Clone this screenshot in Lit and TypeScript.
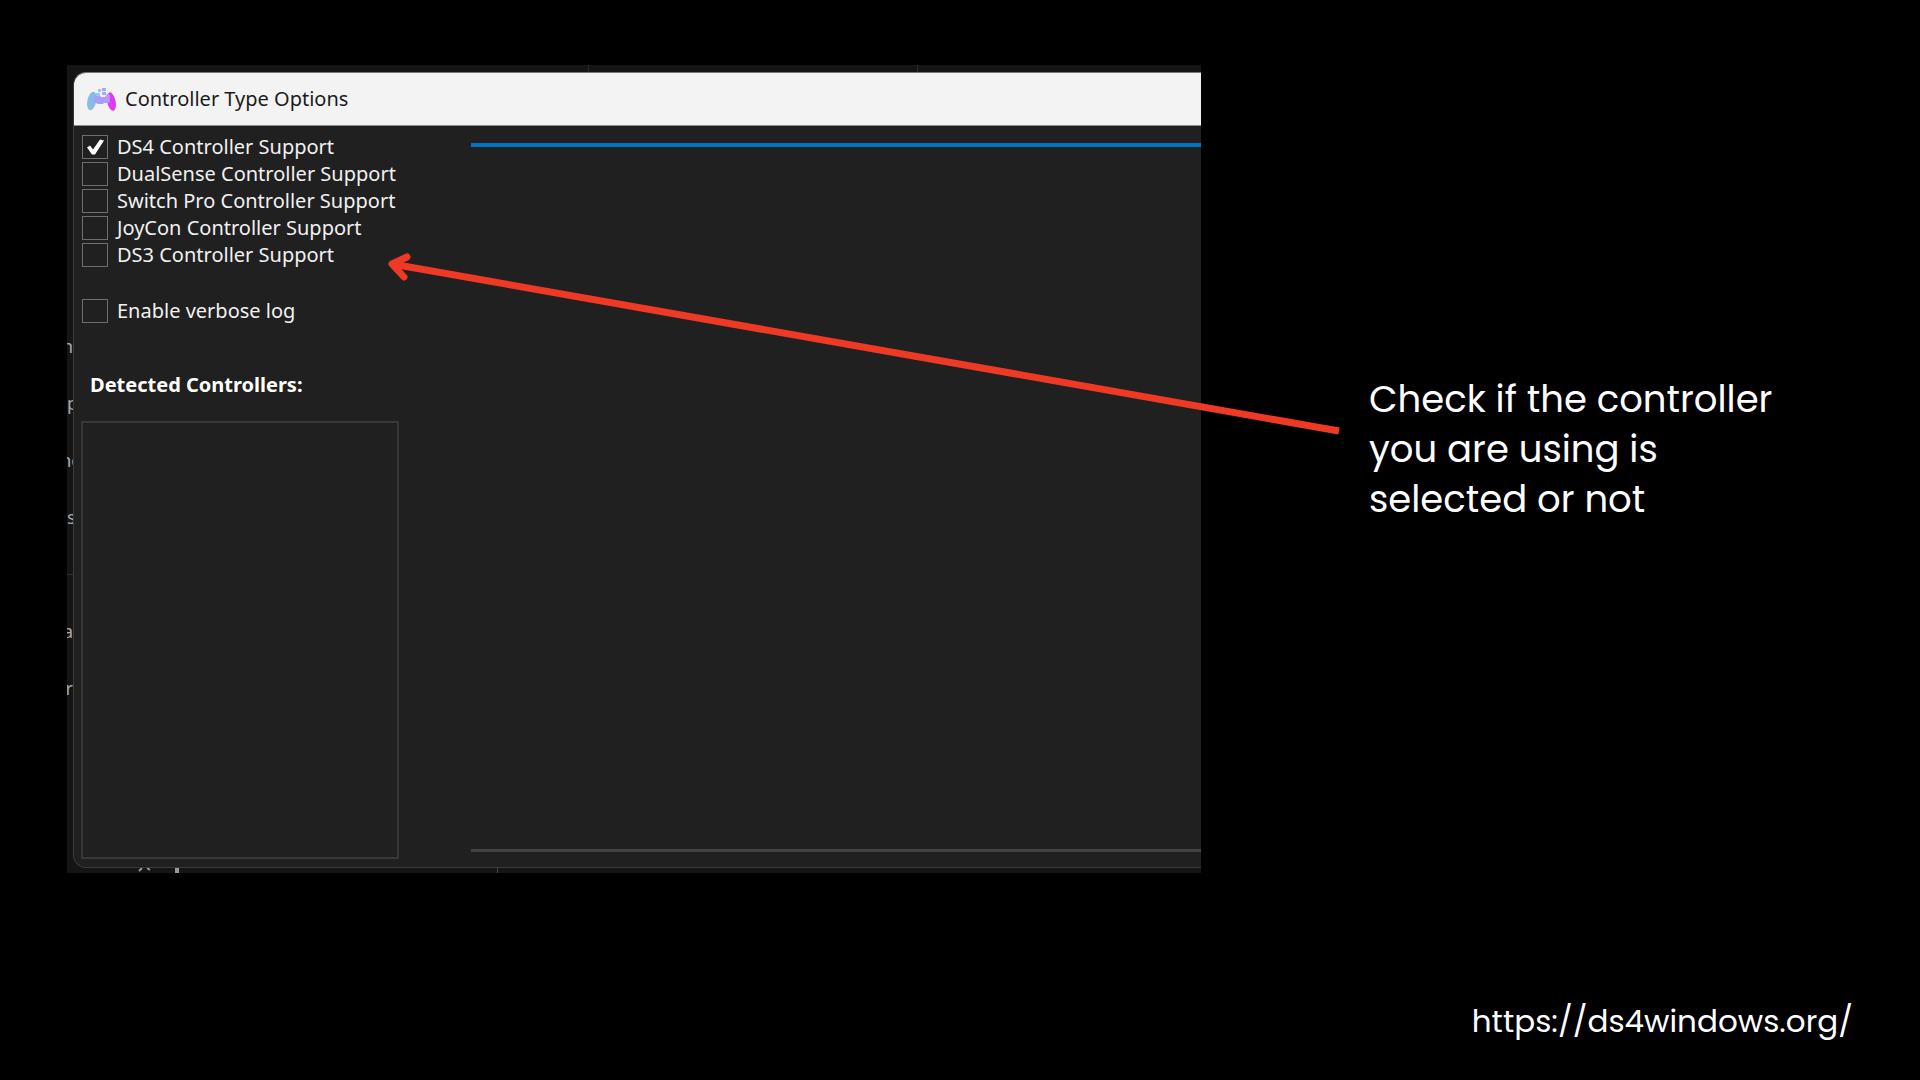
import { LitElement, html, css, svg } from "lit";
import { customElement, property } from "lit/decorators.js";

interface Option {
  id: string;
  label: string;
  checked?: boolean;
}

const SUPPORT: Option[] = [
  { id: "ds4", label: "DS4 Controller Support", checked: true },
  { id: "dualsense", label: "DualSense Controller Support" },
  { id: "switchpro", label: "Switch Pro Controller Support" },
  { id: "joycon", label: "JoyCon Controller Support" },
  { id: "ds3", label: "DS3 Controller Support" },
];

// Ends of the menu labels of the window behind the dialog.
const BEHIND = [
  { text: "n", side: "end" },
  { text: "p", side: "start" },
  { text: "nc", side: "middle" },
  { text: "s", side: "start" },
  { text: "", side: "rule" },
  { text: "a", side: "end" },
  { text: "er", side: "end" },
];

const gamepad = svg`
  <ellipse cx="5.8" cy="14" rx="4.4" ry="9.4" transform="rotate(12 5.8 14)" fill="#86bde6"/>
  <ellipse cx="25.4" cy="14.6" rx="4.2" ry="9.4" transform="rotate(-12 25.4 14.6)" fill="#dc3cfa"/>
  <path d="M9 8h4l2 2h4l2-3h2l1 8-2 1h-4l-1 1h-5l-2-1h-2z" fill="#a99bff"/>
  <path d="M12 2h3v3h-3zM10 6h4v3h-4z" fill="#9cc4f2"/>
  <path d="M16 1h4v3h-4zM16 5h4v3h-4z" fill="#a9a6ff"/>
  <path d="M20 8h4l-1 6h-3z" fill="#c493ff"/>`;

@customElement("option-box")
export class OptionBox extends LitElement {
  @property() label = "";
  @property({ type: Boolean }) checked = false;

  static styles = css`
    :host {
      display: block;
    }
    .row {
      display: flex;
      align-items: center;
      gap: 9px;
      height: 27px;
      font-size: 20px;
      line-height: 27px;
      color: #f1f1f1;
      white-space: nowrap;
    }
    .box {
      appearance: none;
      box-sizing: border-box;
      width: 26px;
      height: 24px;
      margin: 0;
      border: 1px solid #6e6e72;
      background: #202020;
      flex: none;
      display: block;
    }
    .box:checked::before {
      content: "";
      display: block;
      width: 24px;
      height: 22px;
      background: #fff;
      clip-path: polygon(4px 12px, 7px 10px, 10px 14px, 17px 4px, 21px 5px, 12px 19px, 9px 19px);
    }
  `;

  render() {
    return html`<label class="row" for="box">
      <input class="box" id="box" type="checkbox" .checked=${this.checked} />
      <span>${this.label}</span>
    </label>`;
  }
}

@customElement("app-root")
export class AppRoot extends LitElement {
  static styles = css`
    :host {
      display: block;
    }
    .slide {
      position: relative;
      box-sizing: border-box;
      min-height: 100vh;
      padding: 65px 67px 36px 67px;
      background: #000;
      color: #fff;
      display: grid;
      grid-template-columns: 1134fr 652fr;
      grid-template-rows: auto 1fr;
      font-family: "Segoe UI", "Noto Sans", sans-serif;
      overflow: hidden;
    }
    .shot {
      display: grid;
      grid-template-columns: 6px 1fr;
      grid-template-rows: 7px auto 5px;
      background: #151515;
      overflow: hidden;
    }
    .tabs {
      grid-column: 1 / -1;
      display: grid;
      grid-template-columns: 522fr 329fr 283fr;
    }
    .tab {
      border-right: 1px solid #2c2c2c;
    }
    .tab:last-child {
      border-right: none;
    }
    .behind {
      padding-top: 246px;
      overflow: hidden;
      color: #a8a8a8;
      font-size: 18px;
      line-height: 57px;
    }
    .piece {
      display: flex;
      height: 57px;
      overflow: hidden;
    }
    .end {
      justify-content: flex-end;
    }
    .middle {
      justify-content: center;
    }
    .rule {
      align-items: center;
    }
    .rule::before {
      content: "";
      flex: 1;
      height: 1px;
      background: #303030;
    }
    .dialog {
      display: flex;
      flex-direction: column;
      background: #202020;
      border: 1px solid #3a3a3a;
      border-top-color: #777;
      border-right: none;
      border-radius: 13px 0 0 13px;
      overflow: hidden;
    }
    .titlebar {
      display: flex;
      align-items: center;
      gap: 8px;
      height: 52px;
      padding-left: 12px;
      background: #f3f3f3;
      border-bottom: 1px solid #8c8c8c;
      color: #1b1b1b;
    }
    .logo {
      width: 31px;
      height: 24px;
    }
    .title {
      margin: 0;
      font-size: 20px;
      line-height: 28px;
      font-weight: 400;
    }
    .body {
      display: grid;
      grid-template-columns: 318px 1fr;
      column-gap: 72px;
      padding: 7px 0 8px 7px;
    }
    .options {
      padding-left: 1px;
    }
    .log {
      padding: 29px 0 0 1px;
    }
    .heading {
      margin: 47px 0 22px;
      padding-left: 9px;
      font-size: 20px;
      line-height: 28px;
      font-weight: 700;
    }
    .list {
      box-sizing: border-box;
      height: 438px;
      margin: 0;
      padding: 0;
      list-style: none;
      border: 2px solid #38383b;
    }
    .pane {
      margin: 10px 0 7px;
      border-top: 4px solid #0173c7;
      border-bottom: 3px solid #424246;
    }
    .below {
      grid-column: 1 / -1;
      display: block;
      width: 100%;
      height: 5px;
    }
    .note {
      margin: 309px 0 0 168px;
      font-family: Poppins, Inter, sans-serif;
      font-size: 37px;
      line-height: 50px;
      max-width: 410px;
    }
    .link {
      grid-column: 1 / -1;
      place-self: end;
      font-family: Poppins, Inter, sans-serif;
      font-size: 31px;
      line-height: 46px;
      color: #fff;
      text-decoration: none;
    }
    .arrow {
      position: absolute;
      left: 0;
      top: 0;
      width: 100%;
      height: 100%;
      pointer-events: none;
    }
  `;

  render() {
    return html`<main class="slide">
      <section class="shot">
        <div class="tabs">
          <div class="tab"></div>
          <div class="tab"></div>
          <div class="tab"></div>
        </div>
        <div class="behind">
          ${BEHIND.map((b) => html`<div class="piece ${b.side}">${b.text}</div>`)}
        </div>
        <div class="dialog">
          <header class="titlebar">
            <svg class="logo" viewBox="0 0 31 24" aria-hidden="true">${gamepad}</svg>
            <h1 class="title">Controller Type Options</h1>
          </header>
          <div class="body">
            <div>
              <div class="options">
                ${SUPPORT.map(
                  (o) => html`<option-box .label=${o.label} .checked=${!!o.checked}></option-box>`
                )}
              </div>
              <div class="log">
                <option-box .label=${"Enable verbose log"}></option-box>
              </div>
              <h2 class="heading">Detected Controllers:</h2>
              <ul class="list"></ul>
            </div>
            <div class="pane"></div>
          </div>
        </div>
        <svg class="below" viewBox="0 0 1134 5" preserveAspectRatio="xMinYMin slice" aria-hidden="true">
          <path d="M75 0L72 3M80 0L83 2" stroke="#999" stroke-width="2" />
          <path d="M108 0h4v5h-4z" fill="#999" />
          <path d="M430 0h1v5h-1z" fill="#444" />
        </svg>
      </section>
      <p class="note">Check if the controller you are using is selected or not</p>
      <a class="link" href="https://ds4windows.org/">https://ds4windows.org/</a>
      <svg class="arrow" viewBox="0 0 1920 1080" preserveAspectRatio="xMinYMin meet" aria-hidden="true">
        <g fill="none" stroke="#ee3a24" stroke-width="7">
          <path d="M1339 431L392 264" />
          <path d="M407 257L392 264L404 277" stroke-linecap="round" stroke-linejoin="round" />
        </g>
      </svg>
    </main>`;
  }
}
